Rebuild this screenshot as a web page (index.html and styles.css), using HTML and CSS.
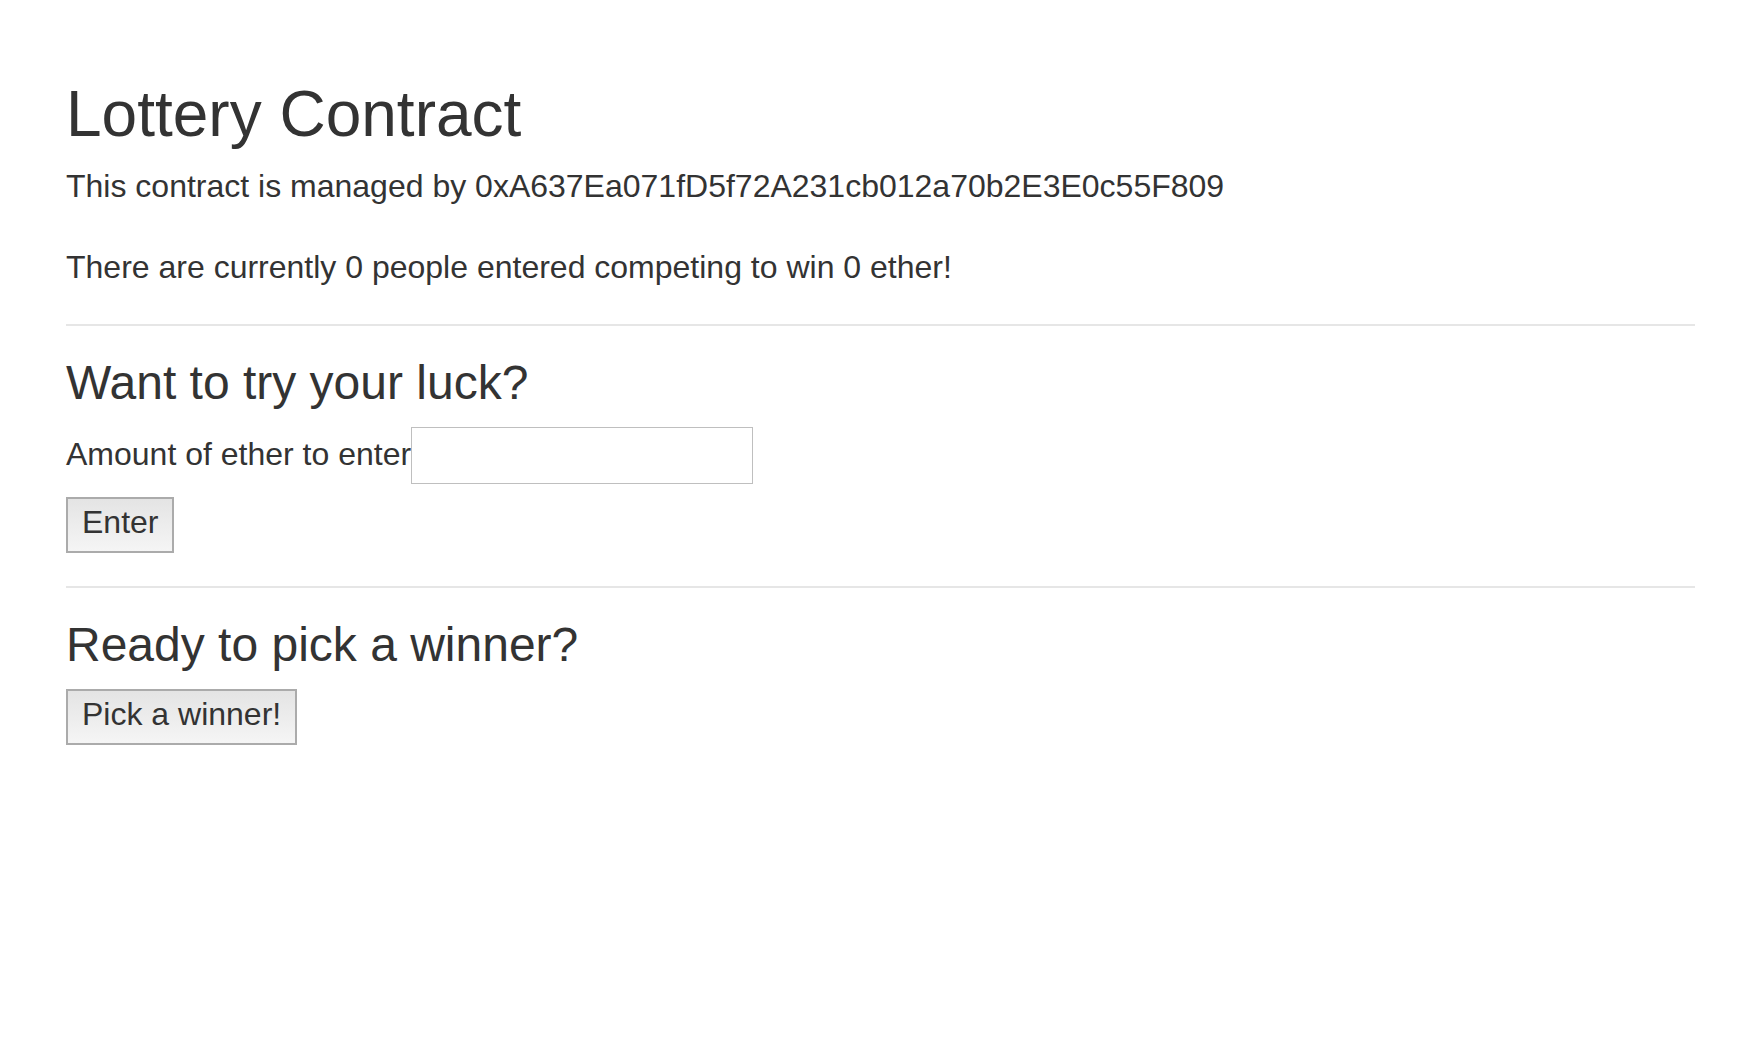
FILE: index.html
```html
<!DOCTYPE html>
<html lang="en">
<head>
<meta charset="utf-8">
<title>Lottery Contract</title>
<link rel="stylesheet" href="styles.css">
</head>
<body>
<div class="container">
  <h1 class="title">Lottery Contract</h1>
  <p class="text">This contract is managed by 0xA637Ea071fD5f72A231cb012a70b2E3E0c55F809</p>
  <p class="text text-last">There are currently 0 people entered competing to win 0 ether!</p>
  <hr class="divider">
  <form class="enter-form">
    <h2 class="heading">Want to try your luck?</h2>
    <div class="field">
      <label class="field-label" for="amount">Amount of ether to enter</label>
      <input class="field-input" id="amount" type="text">
    </div>
    <button class="btn btn-enter" type="button">Enter</button>
  </form>
  <hr class="divider divider-second">
  <h2 class="heading">Ready to pick a winner?</h2>
  <button class="btn" type="button">Pick a winner!</button>
</div>
</body>
</html>
```

FILE: styles.css
```css
html, body {
  margin: 0;
  padding: 0;
  background: #ffffff;
}

body {
  font-family: "Liberation Sans", Arial, Helvetica, sans-serif;
  color: #333333;
}

.container {
  padding: 78px 59px 0 66px;
}

.title {
  margin: 0 0 14px;
  font-size: 64px;
  line-height: 72px;
  font-weight: normal;
}

.text {
  margin: 0 0 37px;
  font-size: 32px;
  line-height: 44px;
}

.text-last {
  margin-bottom: 35px;
}

.divider {
  margin: 0;
  border: 0;
  height: 2px;
  background: #e6e6e6;
}

.divider-second {
  margin-top: 33px;
}

.enter-form {
  margin: 0;
}

.heading {
  margin: 29px 0 16px;
  font-size: 48px;
  line-height: 56px;
  font-weight: normal;
}

.field {
  display: flex;
  align-items: flex-start;
}

.field-label {
  margin-top: 5px;
  font-size: 32px;
  line-height: 44px;
}

.field-input {
  box-sizing: border-box;
  width: 342px;
  height: 57px;
  margin: 0;
  border: 1px solid #bfbfbf;
  border-radius: 0;
  padding: 0 10px;
  font-family: inherit;
  font-size: 32px;
  color: #333333;
  background: #ffffff;
  outline: none;
}

.btn {
  display: block;
  box-sizing: border-box;
  height: 56px;
  margin: 0;
  padding: 5px 14px 11px;
  border: 2px solid #ababab;
  border-radius: 0;
  background: linear-gradient(#e4e4e4, #f5f5f5);
  font-family: inherit;
  font-size: 32px;
  line-height: 36px;
  color: #333333;
  cursor: pointer;
}

.btn-enter {
  margin-top: 13px;
}
```
